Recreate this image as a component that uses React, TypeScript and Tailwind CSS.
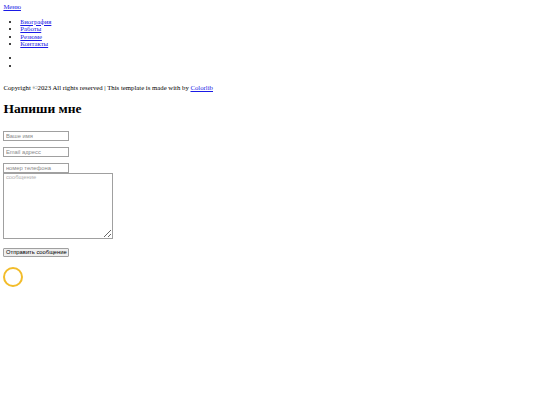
export default function App() {
  return (
    <div className="min-h-[405px] bg-white p-[3.4px] font-['Liberation_Serif',serif] text-[6.75px] leading-[7.5px] text-black">
      <div>
        <a href="#" className="text-[#1a1ae6] underline">Меню</a>
      </div>
      <ul className="my-[6.75px] list-disc pl-[16.9px]">
        <li><a href="#" className="text-[#1a1ae6] underline">Биография</a></li>
        <li><a href="#" className="text-[#1a1ae6] underline">Работы</a></li>
        <li><a href="#" className="text-[#1a1ae6] underline">Резюме</a></li>
        <li><a href="#" className="text-[#1a1ae6] underline">Контакты</a></li>
      </ul>
      <ul className="my-[6.75px] list-disc pl-[16.9px]">
        <li></li>
        <li></li>
      </ul>
      <p className="mt-[14.8px]">
        Copyright ©2023 All rights reserved | This template is made with by{" "}
        <a href="#" className="text-[#1a1ae6] underline">Colorlib</a>
      </p>
      <h1 className="my-[9px] text-[13.5px] font-bold leading-[normal]">Напиши мне</h1>
      <form className="font-['Liberation_Sans',Arial,sans-serif] text-[5.8px] leading-none" onSubmit={(e) => e.preventDefault()}>
        <input
          type="text"
          placeholder="Ваше имя"
          className="mt-[14.6px] block h-[9.5px] w-[66px] border border-[#a0a0a0] px-[1.5px] placeholder:text-[#8a8a8a]"
        />
        <input
          type="email"
          placeholder="Email адресс"
          className="mt-[6.5px] block h-[9.5px] w-[66px] border border-[#a0a0a0] px-[1.5px] placeholder:text-[#8a8a8a]"
        />
        <input
          type="text"
          placeholder="номер телефона"
          className="mt-[6.5px] block h-[9.5px] w-[66px] border border-[#a0a0a0] px-[1.5px] placeholder:text-[#8a8a8a]"
        />
        <textarea
          placeholder="сообщение"
          className="block h-[66px] w-[110px] border border-[#a0a0a0] px-[1.5px] py-[1px] placeholder:text-[#b0b0b0]"
        ></textarea>
        <button
          type="submit"
          className="mt-[9px] block h-[9.5px] w-[66px] rounded-[1px] border border-[#a0a0a0] bg-[#efefef]"
        >
          Отправить сообщение
        </button>
      </form>
      <div className="mt-[10px] h-[20px] w-[20px] rounded-full border-2 border-[#f2bc2a]"></div>
    </div>
  );
}
